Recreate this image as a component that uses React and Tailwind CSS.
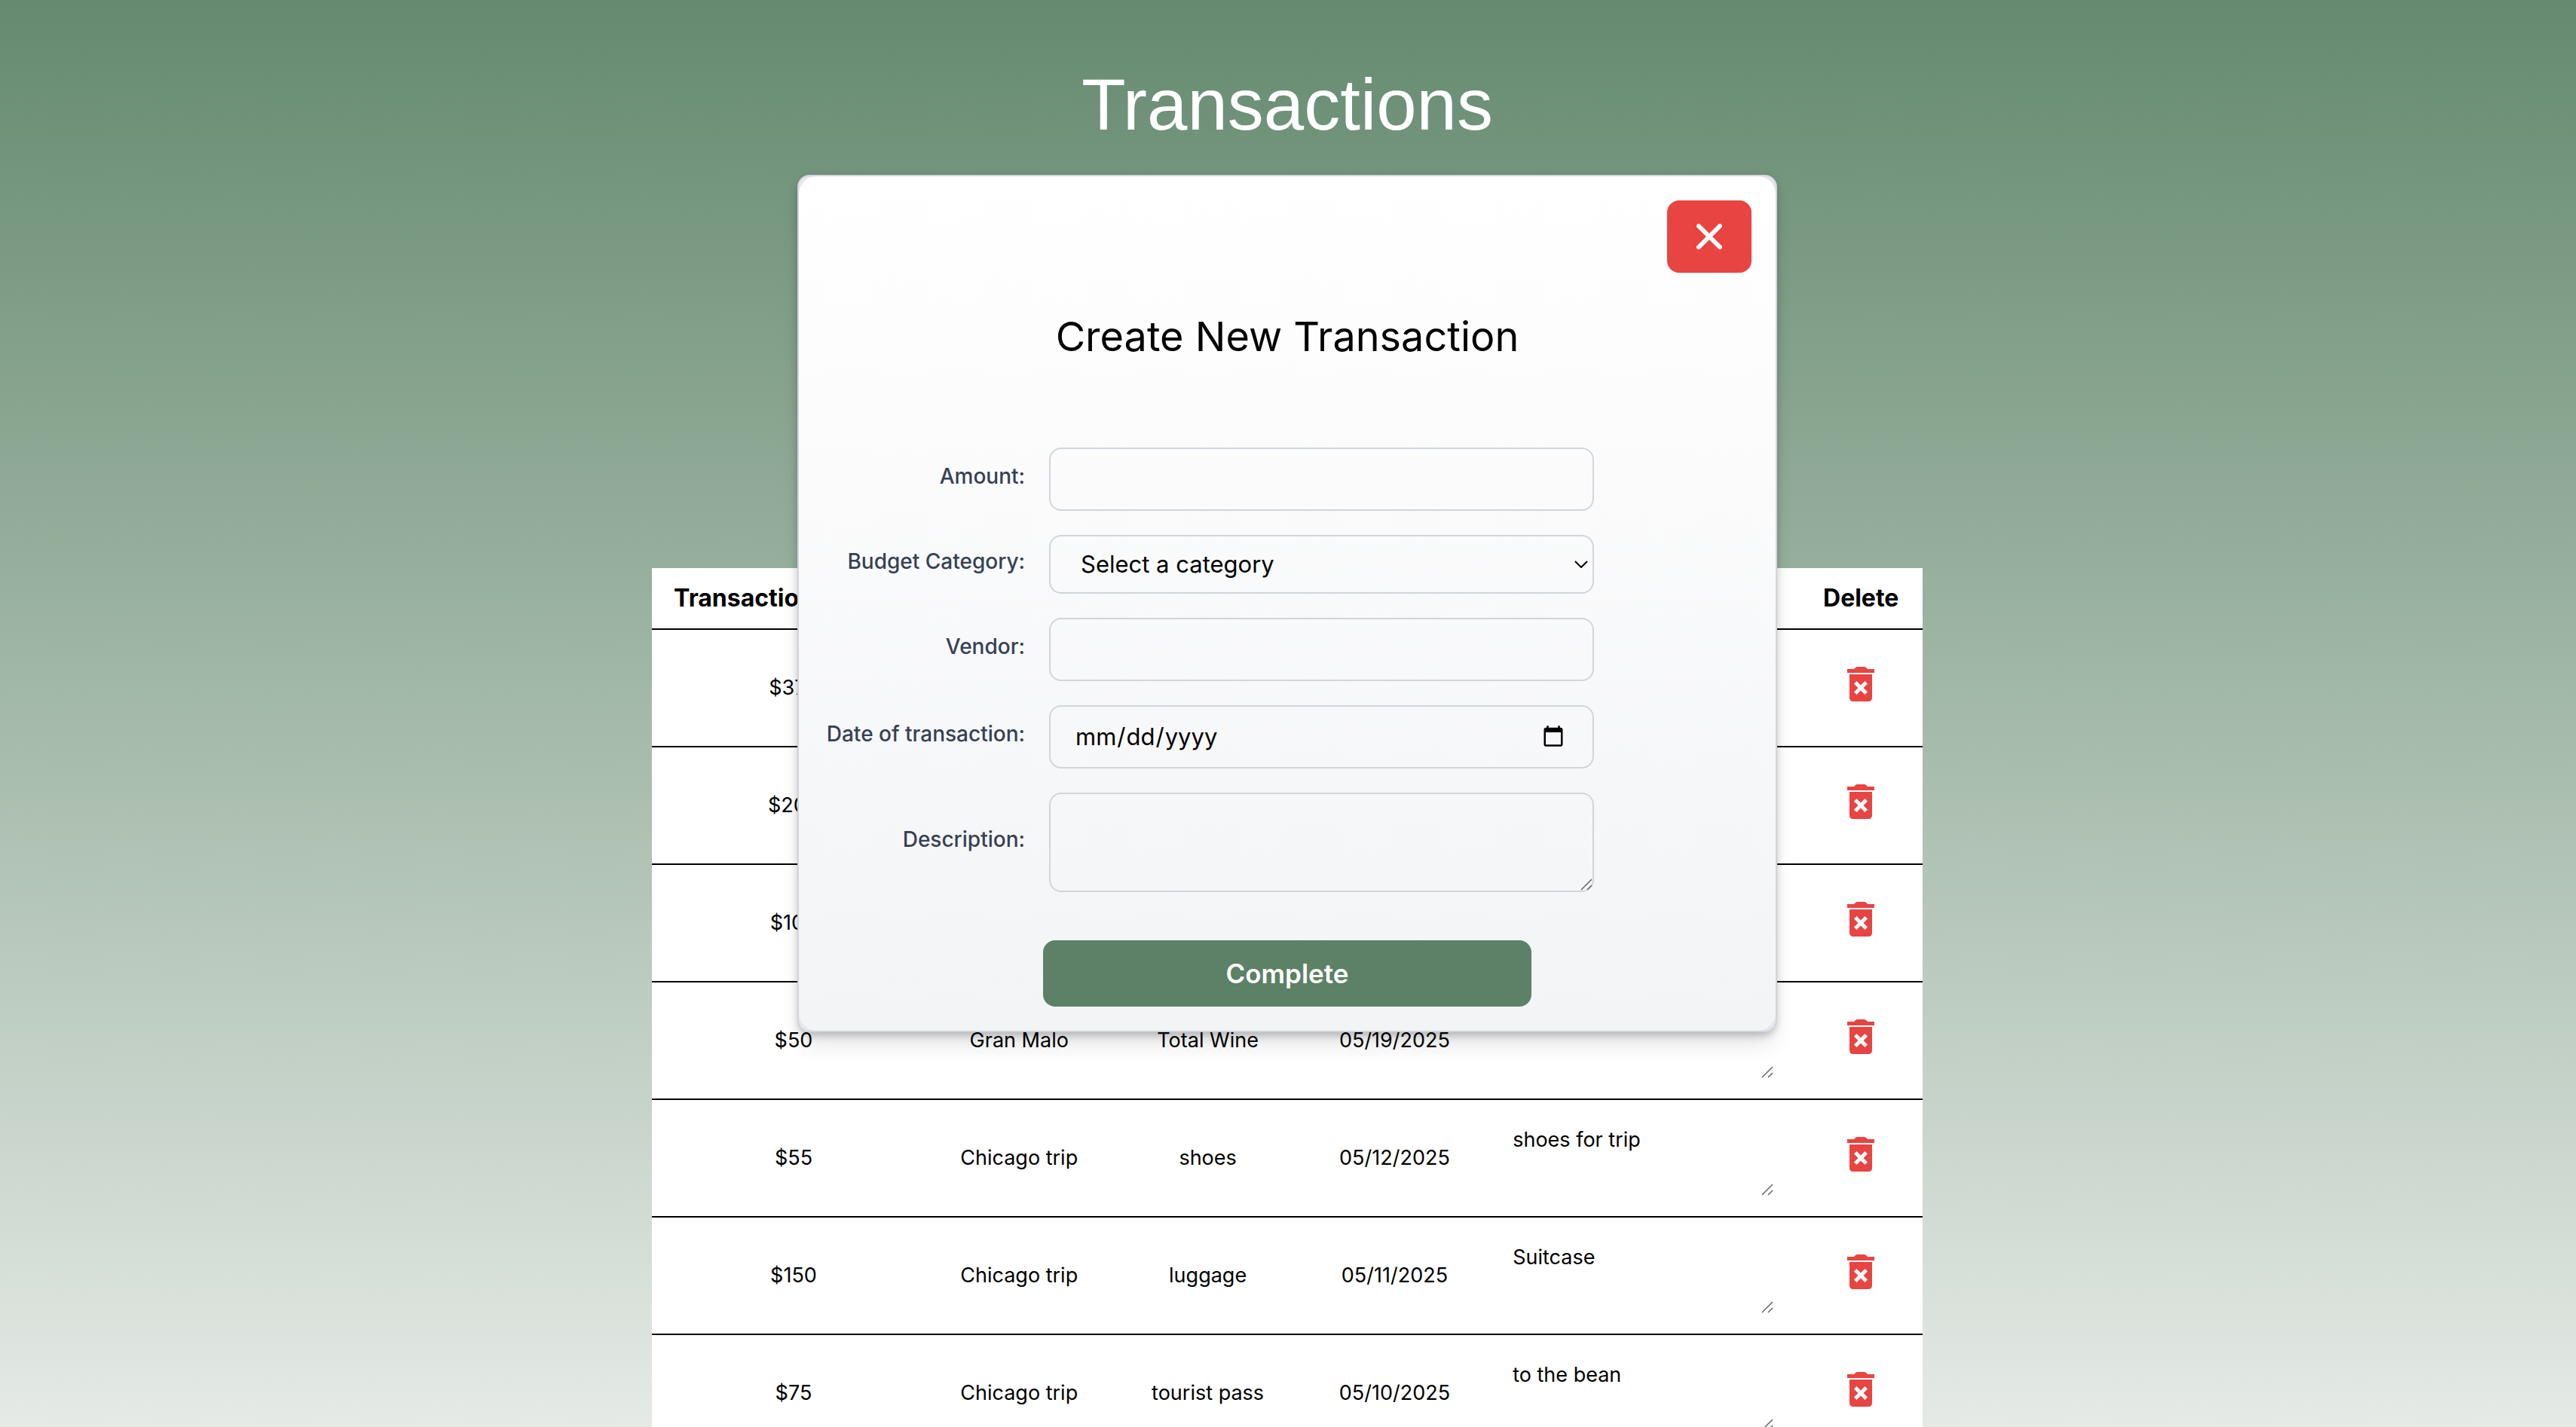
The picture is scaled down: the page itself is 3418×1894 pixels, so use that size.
import React from "react";

const rows = [
  { amount: "$375", category: "Chicago trip", vendor: "hotel", date: "05/22/2025", note: "" },
  { amount: "$200", category: "Chicago trip", vendor: "flight", date: "05/21/2025", note: "" },
  { amount: "$100", category: "Chicago trip", vendor: "dinner", date: "05/20/2025", note: "" },
  { amount: "$50", category: "Gran Malo", vendor: "Total Wine", date: "05/19/2025", note: "" },
  { amount: "$55", category: "Chicago trip", vendor: "shoes", date: "05/12/2025", note: "shoes for trip" },
  { amount: "$150", category: "Chicago trip", vendor: "luggage", date: "05/11/2025", note: "Suitcase" },
  { amount: "$75", category: "Chicago trip", vendor: "tourist pass", date: "05/10/2025", note: "to the bean" },
];

function TrashIcon() {
  return (
    <svg viewBox="0 0 36 46" className="h-[46px] w-9" fill="#e84442" aria-hidden="true">
      <path d="M0 3h9l2-2q1-1 2.500-1h9q1.500 0 2.500 1l2 2h9v5H0z" />
      <path
        fillRule="evenodd"
        d="M3 10h30v31q0 5-5 5H8q-5 0-5-5zM12.500 19L9 22.500l5.500 5.500L9 33.500l3.500 3.500 5.500-5.500 5.500 5.500 3.500-3.500-5.500-5.500 5.500-5.500-3.500-3.500-5.500 5.500z"
      />
    </svg>
  );
}

function Grip() {
  return (
    <svg
      viewBox="0 0 16 16"
      className="pointer-events-none absolute right-0.5 bottom-0.5 size-4"
      stroke="#666"
      strokeWidth="1.500"
      aria-hidden="true"
    >
      <path d="M1 15L15 1M9 15l6-6" />
    </svg>
  );
}

function Field({ id, label, children }) {
  return (
    <div className="grid grid-cols-[300fr_755fr_241fr] items-center">
      <label htmlFor={id} className="pb-2 text-right text-[28px] leading-10 font-medium whitespace-nowrap text-gray-700">
        {label}
      </label>
      <div className="relative ml-8">{children}</div>
    </div>
  );
}

const box = "block w-full rounded-2xl border-2 border-gray-300 bg-transparent px-8 text-[31px] text-black";

export default function App() {
  return (
    <div className="relative h-screen overflow-hidden bg-linear-to-b from-[#658a70] to-[#e5eae6] pr-0.5 font-['Inter','Liberation_Sans',sans-serif] text-black">
      <h1 className="pt-[81px] text-center font-['Liberation_Sans',Arial,sans-serif] text-8xl leading-[116px] text-white">
        Transactions
      </h1>

      <table className="mx-auto mt-[557px] w-full max-w-[1686px] table-fixed border-collapse bg-white text-center text-[27px]">
        <colgroup>
          <col className="w-[22.3%]" />
          <col className="w-[13.2%]" />
          <col className="w-[16.5%]" />
          <col className="w-[12.9%]" />
          <col className="w-[25.4%]" />
          <col className="w-[9.7%]" />
        </colgroup>
        <thead>
          <tr className="h-[81px] border-b-2 border-black text-[32px] whitespace-nowrap">
            <th className="font-bold">Transaction Amount</th>
            <th className="font-bold">Category</th>
            <th className="font-bold">Vendor</th>
            <th className="font-bold">Date</th>
            <th className="font-bold">Description</th>
            <th className="font-bold">Delete</th>
          </tr>
        </thead>
        <tbody>
          {rows.map((r) => (
            <tr key={r.date} className="h-[156px] border-b-2 border-black">
              <td>{r.amount}</td>
              <td>{r.category}</td>
              <td>{r.vendor}</td>
              <td>{r.date}</td>
              <td className="px-8">
                <div className="relative">
                  <textarea
                    aria-label={`Description for ${r.date}`}
                    defaultValue={r.note}
                    className="block h-[104px] w-full resize-none px-4 py-2 text-[27px] leading-10"
                  />
                  <Grip />
                </div>
              </td>
              <td>
                <button type="button" aria-label={`Delete ${r.date}`} className="block w-full pb-2.5">
                  <span className="flex justify-center">
                    <TrashIcon />
                  </span>
                </button>
              </td>
            </tr>
          ))}
        </tbody>
      </table>

      <div className="absolute inset-x-0 top-[232px] flex justify-center pr-0.5">
        <div
          role="dialog"
          aria-labelledby="dialog-title"
          className="w-full max-w-[1300px] rounded-2xl border-2 border-gray-300 bg-gray-200 shadow-[0_20px_30px_-6px_rgba(0,0,0,0.12),0_8px_12px_-4px_rgba(0,0,0,0.18),0_0_12px_rgba(0,0,0,0.1)]"
        >
          <form className="rounded-3xl bg-linear-to-b from-white to-gray-100 pb-8">
            <div className="flex justify-end px-8 pt-8">
              <button
                type="button"
                aria-label="Close"
                className="flex h-24 w-28 items-center justify-center rounded-2xl bg-[#e84442]"
              >
                <svg viewBox="0 0 34 34" className="size-[34px]" stroke="white" strokeWidth="6" strokeLinecap="round" aria-hidden="true">
                  <path d="M3 3l28 28M31 3l-28 28" />
                </svg>
              </button>
            </div>
            <h2 id="dialog-title" className="mt-12 text-center text-[54px] leading-[74px]">
              Create New Transaction
            </h2>
            <div className="mt-[110px] flex flex-col gap-8">
              <Field id="amount" label="Amount:">
                <input id="amount" type="text" className={box + " h-[84px]"} />
              </Field>
              <Field id="category" label="Budget Category:">
                <select id="category" className={box + " h-[78px] appearance-none pl-10"}>
                  <option>Select a category</option>
                </select>
                <svg
                  viewBox="0 0 18 10"
                  className="pointer-events-none absolute top-[34px] right-2 h-2.5 w-[18px]"
                  fill="none"
                  stroke="black"
                  strokeWidth="2"
                  aria-hidden="true"
                >
                  <path d="M1 1l8 8 8-8" />
                </svg>
              </Field>
              <Field id="vendor" label="Vendor:">
                <input id="vendor" type="text" className={box + " h-[84px]"} />
              </Field>
              <Field id="date" label="Date of transaction:">
                <input
                  id="date"
                  type="date"
                  className={
                    box +
                    " h-[84px] [&::-webkit-calendar-picker-indicator]:box-content [&::-webkit-calendar-picker-indicator]:size-8 [&::-webkit-calendar-picker-indicator]:p-1"
                  }
                />
              </Field>
              <Field id="description" label="Description:">
                <textarea id="description" className={box + " h-[132px] resize-none py-4"} />
                <Grip />
              </Field>
            </div>
            <div className="mt-16 flex justify-center">
              <button type="submit" className="h-[88px] w-1/2 rounded-2xl bg-[#5c8166] text-[35px] font-semibold text-white">
                Complete
              </button>
            </div>
          </form>
        </div>
      </div>
    </div>
  );
}
